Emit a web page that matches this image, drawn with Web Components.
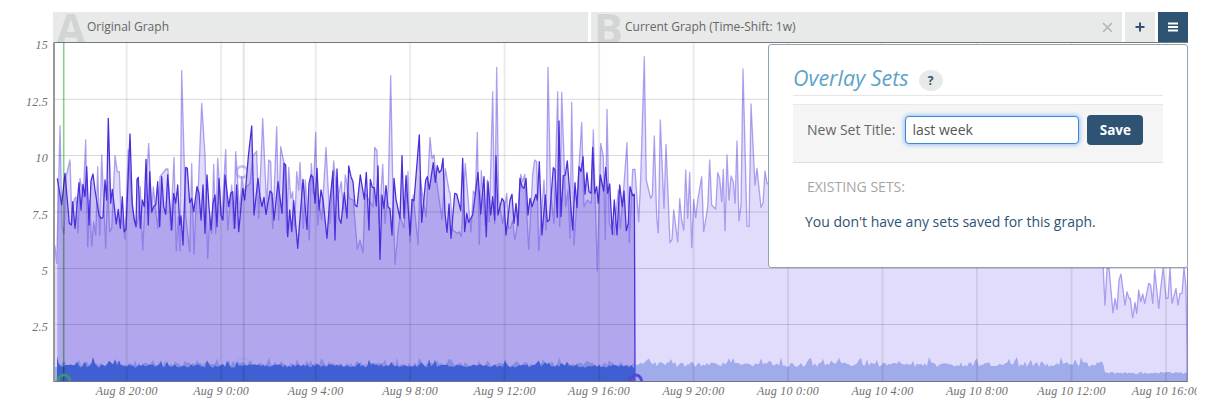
<!DOCTYPE html>
<html>
<head>
<meta charset="utf-8">
<title>Overlay Sets</title>
<style>
  html, body { margin: 0; background: #fff; overflow: hidden; }
</style>
</head>
<body>
<graph-view>
  <graph-tab slot="tabs" letter="A" style="flex: 0 0 535px">Original Graph</graph-tab>
  <graph-tab slot="tabs" letter="B" closable style="flex: 1 1 auto">Current Graph (Time-Shift: 1w)</graph-tab>
  <tab-button slot="tabs" icon="plus"></tab-button>
  <tab-button slot="tabs" icon="menu" active></tab-button>
  <time-chart slot="chart"></time-chart>
  <overlay-panel slot="overlay"></overlay-panel>
</graph-view>

<script>
// traces are read off in 3x coordinates, so a trace is "x y, x y" plus its origin
function trace(x0, y0, str) {
    return str.trim().split(";").map(function (p) {
        var v = p.trim().split(",");
        return [x0 + v[0] / 3, y0 + v[1] / 3];
    });
}

var lightLine = [[53, 268], [55, 246]].concat(
    trace(50, 60, "20,610;30,198;36,500;42,520;48,350;60,300;66,490;72,420;78,410;84,518;90,355;100,410;107,240;113,560;119,420;125,558;131,485;137,525;143,320;149,525;155,285;167,565;173,365;179,515;185,505;195,287;202,335;208,335;213,455;225,537;235,270;245,410;251,465;258,500;265,470;271,380;278,570;284,450;296,250;305,460;310,380;318,460;324,505;330,350;348,327;354,327;362,510;372,292;379,572;385,470;390,572;395,32;407,465;419,575;425,310;432,583;438,440;445,380;455,130;465,285;473,595;479,470;485,520;491,313;497,520;503,295;515,480;527,268;533,510;545,375;551,505;557,275;569,460;575,350;581,395;590,380"),
    trace(250, 60, "0,370;8,290;20,273;26,475;38,175;50,440;56,300;62,305;68,505;80,200;86,480;92,260;104,320;110,520;116,322;122,415;128,395;134,500;140,335;146,390;150,307;160,505;166,360;178,540;184,310;190,400;197,217;203,495;209,440;215,480;228,262;240,490;251,303;262,420;274,365;280,450;286,345;298,415;310,420;322,568;330,540;339,577;345,400;357,420;369,440;374,262;381,272;387,490;398,313;405,490;415,380;422,47;428,360;435,613;445,505;450,470;462,503;474,335;480,545;490,405;504,553;510,350;520,420;528,470;540,232;546,295;552,285;558,350;576,478;586,325;598,395"),
    trace(450, 60, "0,397;8,510;22,520;28,515;34,530;46,310;56,440;63,515;70,393;76,405;82,217;88,553;94,332;106,497;112,360;118,485;128,95;134,490;140,22;146,420;158,490;170,400;176,505;182,503;188,480;194,538;200,510;212,343;218,365;224,343;236,568;248,340;254,300;260,305;266,572;282,360;288,510;294,22;302,400;312,490;323,95;329,500;335,97;347,440;354,390;360,535;365,127;372,555;384,370;395,187;402,440;412,420;424,430;430,210;442,633;452,250;460,290;466,538;471,148;478,490;492,525;505,390;511,505;520,400;531,248;538,548;548,328;555,328;566,485;572,355"),
    trace(640, 50, "13,20;19,390;32,445;37,435;43,258;50,500;55,548;61,210;72,475;78,283;90,578;96,568;101,480;113,575;119,445;125,510;131,540;137,360;143,505;149,367;155,593;161,448;167,503;173,450;185,380;191,545;203,470;209,330;215,465;227,477;233,368;239,385;245,455;250,358;255,542;261,315;267,450;273,378;280,395;285,460;291,273;297,512;303,465;309,57;321,528;327,530;333,162;345,405;351,355;363,472;369,460;375,363;381,400"),
    [[800, 200], [1100, 200]],
    trace(950, 250, "465,165;471,55;477,52;489,188;495,145;501,178;507,90;513,72;525,165;531,125;537,145;541,145;548,203;555,157;560,190;566,120;572,155;578,132;584,160;596,100;602,105;608,160;614,58;626,175;632,115;640,50;648,145;654,145;660,52;666,160;678,115;684,165;690,130;696,130;702,52;708,110;711,300"),
    [[1187, 381]]
);

var darkLine = [].concat(
    trace(50, 60, "22,355;35,435;45,340;58,490;64,495;68,425;75,505;87,368;93,450;99,373;105,410;110,320;117,495;123,362;129,342;135,390;147,465;153,475;159,472;165,360;170,420;175,175;182,430;187,388;199,492;205,448;211,505;217,410;223,515;228,508;240,222;247,435;253,480;258,500;261,358;265,352;271,505;277,420;283,440;288,298;295,495;299,335;305,455;312,438;317,435;323,365;329,500;335,350;341,440;347,463;353,345;365,510;371,400;377,430;383,375;389,495;393,468;399,555;407,322;412,325;419,428;425,415;431,455;441,380;447,400;453,480;459,375;465,520;471,345;477,440;483,510;489,430;495,405;501,500;507,355;513,465;519,480;525,345;536,440;542,400;548,395;554,505;560,375;566,515;578,385;584,420;595,290"),
    trace(250, 60, "5,198;12,465;24,355;30,410;36,440;42,412;48,463;60,393;66,400;72,480;84,365;96,460;102,310;107,315;113,530;119,450;125,515;131,422;143,565;159,358;171,508;177,370;183,345;189,352;195,430;201,325;207,450;213,390;219,420;231,535;237,450;249,333;255,540;261,327;267,475;273,490;283,398;291,475;296,318;303,350;309,365;315,435;321,440;331,345;343,418;349,337;357,510;361,358;367,382;373,383;379,438;384,318;390,598;396,405;402,445;408,377;414,440;420,447;426,525;432,355;438,418;450,475;456,287;462,475;468,347;480,525;486,418;492,422;508,225;515,487;527,360;532,350;538,388;550,308;556,367;562,317;568,338;574,330;579,295;585,460;591,517;597,432"),
    trace(450, 60, "3,535;14,400;20,402;32,452;38,295;44,515;50,460;56,487;68,465;84,337;92,462;102,350;109,530;114,365;122,465;128,410;134,480;138,288;144,465;156,415;162,425;168,525;180,420;186,403;192,490;198,430;204,497;210,355;216,380;222,385;228,355;234,465;240,415;246,440;258,403;262,420;268,305;276,525;286,405;292,485;298,480;310,323;315,330;322,472;327,183;333,470;340,347;346,345;352,303;368,510;375,368;381,443;387,320;393,335;399,290;405,403;411,338;417,395;423,400;428,262;434,400;440,380;445,430;451,345;461,393;467,322;473,400;479,372;487,523;493,420;501,525;509,375;517,440;522,393;529,512;535,490;540,380;548,407;553,403;554,660"),
    [[635, 381]]
);

// the two small series along the floor of the chart, seeded so the picture is stable
function seeded(seed) {
    return function () {
        seed = (seed * 1664525 + 1013904223) % 4294967296;
        return seed / 4294967296;
    };
}
function floorBand(from, to, seed, base, jitter, spikes) {
    var r = seeded(seed), pts = [];
    for (var x = from; x <= to; x += 2) {
        var y = base + (r() - 0.5) * jitter;
        if (r() < spikes) y -= 2 + r() * 4;
        pts.push([x, y]);
    }
    return pts;
}
var lightBand = [[53, 367], [57, 367]].concat(
    floorBand(59, 1103, 7, 364.5, 5, 0.16),
    floorBand(1105, 1187, 11, 373, 2.5, 0.02)
);
[[1046, 354], [974, 358], [1081, 357], [1017, 357], [645, 362], [686, 358], [733, 358], [811, 358]].forEach(function (s) {
    lightBand.forEach(function (p) { if (Math.abs(p[0] - s[0]) < 1) p[1] = s[1]; });
});
var darkBand = [[57, 356]].concat(floorBand(59, 635, 23, 366, 3.5, 0.08));
[[93, 357], [227, 361], [270, 362]].forEach(function (s) {
    darkBand.forEach(function (p) { if (Math.abs(p[0] - s[0]) < 1) p[1] = s[1]; });
});

function toPath(pts, close) {
    var d = pts.map(function (p, i) {
        return (i ? "L" : "M") + p[0].toFixed(1) + " " + p[1].toFixed(1);
    }).join("");
    if (close) d += "L" + pts[pts.length - 1][0].toFixed(1) + " 381L" + pts[0][0].toFixed(1) + " 381Z";
    return d;
}

class GraphView extends HTMLElement {
    constructor() {
        super();
        this.attachShadow({mode: "open"});
        this.shadowRoot.innerHTML = `<style>
            :host { display: block; position: relative; width: 1205px; height: 410px; padding-top: 12px; box-sizing: border-box; }
            .tabs { display: flex; gap: 3px; height: 30px; margin-left: 53px; width: 1135px; }
            .over { position: absolute; top: 44px; left: 768px; }
        </style>
        <div class="tabs"><slot name="tabs"></slot></div>
        <slot name="chart"></slot>
        <div class="over"><slot name="overlay"></slot></div>`;
    }
}

class GraphTab extends HTMLElement {
    constructor() {
        super();
        this.attachShadow({mode: "open"});
    }
    connectedCallback() {
        var close = this.hasAttribute("closable") ? `<svg class="x" width="11" height="11" viewBox="0 0 11 11"><path d="M1 1L10 10M10 1L1 10" stroke="#b4b6b6" stroke-width="1.6" fill="none"/></svg>` : "";
        this.shadowRoot.innerHTML = `<style>
            :host { display: flex; align-items: center; height: 30px; background: #e8e9e9; overflow: hidden; font: 12px "Open Sans", sans-serif; color: #666; }
            .letter { flex: none; width: 31px; margin-left: 3px; height: 30px; font: 700 43px/34px "Open Sans", sans-serif; color: #d3d5d5; }
            .label { flex: 1; white-space: nowrap; margin-bottom: 1px; }
            .x { flex: none; margin-right: 9px; }
        </style>
        <span class="letter">${this.getAttribute("letter")}</span>
        <span class="label"><slot></slot></span>${close}`;
    }
}

class TabButton extends HTMLElement {
    constructor() {
        super();
        this.attachShadow({mode: "open"});
    }
    connectedCallback() {
        var active = this.hasAttribute("active");
        var icon = this.getAttribute("icon") === "plus"
            ? `<path d="M5 0.5V9.5M0.5 5H9.5" stroke="#2e5373" stroke-width="2" fill="none"/>`
            : `<path d="M0 1.5H10M0 5H10M0 8.5H10" stroke="#fff" stroke-width="1.8" fill="none"/>`;
        this.shadowRoot.innerHTML = `<style>
            :host { flex: 0 0 30px; height: 30px; display: flex; align-items: center; justify-content: center; background: ${active ? "#2e5373" : "#e8e9e9"}; }
            svg { display: block; }
        </style>
        <svg width="10" height="10" viewBox="0 0 10 10">${icon}</svg>`;
    }
}

class TimeChart extends HTMLElement {
    constructor() {
        super();
        this.attachShadow({mode: "open"});
    }
    connectedCallback() {
        var ticks = [["15", 42], ["12.5", 99.3], ["10", 155.5], ["7.5", 212], ["5", 268.5], ["2.5", 324.5]];
        var times = ["Aug 8 20:00", "Aug 9 0:00", "Aug 9 4:00", "Aug 9 8:00", "Aug 9 12:00", "Aug 9 16:00", "Aug 9 20:00", "Aug 10 0:00", "Aug 10 4:00", "Aug 10 8:00", "Aug 10 12:00", "Aug 10 16:00"];
        var grid = "", labels = "";
        ticks.forEach(function (t) {
            if (t[1] > 42) grid += `<path class="h" d="M53 ${t[1]}H1188"/>`;
            labels += `<text class="y" x="48" y="${t[1] + 6.5}">${t[0]}</text>`;
        });
        times.forEach(function (t, i) {
            var x = 126.7 + i * 94.48;
            grid += `<path class="v" d="M${x} 42V381"/>`;
            labels += `<text class="t" x="${x}" y="395">${t}</text>`;
        });
        // the svg starts 8px above the plot so the "15" label keeps its top
        this.shadowRoot.innerHTML = `<style>
            :host { display: block; width: 1197px; height: 376px; margin-top: -8px; overflow: hidden; }
            svg { display: block; }
            text { font: italic 12px "Liberation Serif", serif; fill: #6f6f6f; letter-spacing: .25px; }
            .y { text-anchor: end; }
            .t { text-anchor: middle; }
            .h { stroke: rgba(0,0,0,.15); stroke-width: 1; }
            .v { stroke: rgba(0,0,0,.08); stroke-width: 2; }
            .ln { fill: none; stroke-linejoin: round; }
        </style>
        <svg width="1197" height="376" viewBox="0 34 1197 376">
            <defs><clipPath id="plot"><rect x="53" y="42" width="1135" height="339"/></clipPath></defs>
            <g clip-path="url(#plot)">
                <path d="${toPath(lightLine, true)}" fill="#e1dcfb"/>
                <path d="${toPath(darkLine, true)}" fill="rgba(30,0,195,.24)"/>
                <circle cx="242" cy="172" r="5.5" fill="none" stroke="#cbc4f6" stroke-width="3"/>
                <circle cx="243" cy="364" r="6" fill="none" stroke="rgba(150,165,240,.6)" stroke-width="3"/>
                <path class="ln" d="${toPath(lightLine)}" stroke="rgba(100,80,225,.5)" stroke-width="1.3"/>
                <path class="ln" d="${toPath(darkLine)}" stroke="#4a2fdb" stroke-width="1.3"/>
                <path d="${toPath(lightBand, true)}" fill="rgba(80,110,215,.45)"/>
                <path d="${toPath(darkBand, true)}" fill="#3f5fd2"/>
                ${grid}
                <path d="M243.7 42V381" stroke="rgba(0,0,0,.11)" stroke-width="2"/>
                <path d="M63.7 42V381" stroke="#8ccf8c" stroke-width="1.6" style="mix-blend-mode:multiply"/>
                <circle cx="64" cy="381" r="6" fill="none" stroke="#3b9478" stroke-width="3"/>
                <circle cx="635.5" cy="381" r="6" fill="none" stroke="#5a43d8" stroke-width="3"/>
            </g>
            <path d="M53 42.5H1188" stroke="#777" stroke-width="1" fill="none"/>
            <path d="M53 381.5H1188" stroke="#70707f" stroke-width="1" fill="none"/>
            <path d="M54 42V382" stroke="#999" stroke-width="2" fill="none"/>
            <path d="M1187.5 267V382" stroke="#8d86b5" stroke-width="1" fill="none"/>
            ${labels}
        </svg>`;
    }
}

class OverlayPanel extends HTMLElement {
    constructor() {
        super();
        this.attachShadow({mode: "open"});
        this.shadowRoot.innerHTML = `<style>
            :host { display: block; box-sizing: border-box; width: 420px; height: 224px; background: #fff; border: 1px solid #90a4b1; border-radius: 3px; padding: 0 24px; font: 14px "Open Sans", sans-serif; color: #666; }
            .head { display: flex; align-items: center; gap: 10px; height: 51px; border-bottom: 1px solid #e6e6e6; margin-bottom: 8px; box-sizing: border-box; padding-top: 15px; }
            h2 { margin: 0; font: italic 400 21.5px "Open Sans", sans-serif; color: #5ea3c7; }
            .help { width: 24px; height: 21px; border-radius: 50%; background: #e8e9e9; color: #2e5373; font: 700 12px/21px "Open Sans", sans-serif; text-align: center; margin-top: 5px; }
            .form { display: flex; align-items: center; height: 59px; box-sizing: border-box; background: #f5f5f5; border-top: 1px solid #e9e9e9; border-bottom: 1px solid #dedede; padding: 0 0 8px 14px; }
            .form label { margin-right: 10px; }
            input { box-sizing: border-box; width: 174px; height: 28px; border: 1.5px solid #3f86d8; border-radius: 4px; box-shadow: 0 0 4px 1px #8fc0f2; padding: 0 6px; font: 14px "Open Sans", sans-serif; color: #555; outline: none; margin-right: 8px; }
            button { width: 56px; height: 30px; border: 0; border-radius: 4px; background: #2e5373; color: #fff; font: 700 13.5px "Open Sans", sans-serif; padding: 0; }
            .sets { padding: 14px 14px 0; color: #a6a6a6; }
            .none { margin: 16px 0 0 -2px; color: #2e5373; font-size: 14px; }
        </style>
        <div class="head"><h2>Overlay Sets</h2><span class="help">?</span></div>
        <div class="form"><label>New Set Title:</label><input value="last week"><button>Save</button></div>
        <div class="sets">EXISTING SETS:<p class="none">You don't have any sets saved for this graph.</p></div>`;
    }
}

customElements.define("graph-view", GraphView);
customElements.define("graph-tab", GraphTab);
customElements.define("tab-button", TabButton);
customElements.define("time-chart", TimeChart);
customElements.define("overlay-panel", OverlayPanel);
</script>
</body>
</html>
